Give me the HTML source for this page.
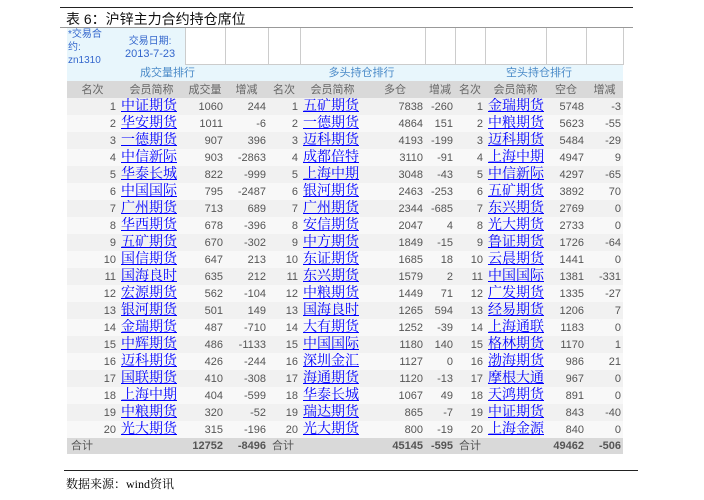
<!DOCTYPE html>
<html><head><meta charset="utf-8"><style>
body{margin:0;width:704px;height:500px;background:#fff;font-family:"Liberation Sans","Noto Sans CJK SC",sans-serif;position:relative;overflow:hidden}
.l1{position:absolute;left:60px;top:7px;width:573px;height:1px;background:#222}
.l2{position:absolute;left:60px;top:27px;width:573px;height:1px;background:#999}
.t{position:absolute;left:66px;top:9px;font-size:14px;color:#111}
.l3{position:absolute;left:64px;top:470px;width:574px;height:1px;background:#222}
.src{position:absolute;left:66px;top:475px;font-size:12px;font-family:"Liberation Serif","Noto Serif CJK SC",serif}
table{position:absolute;left:67px;top:28px;border-collapse:collapse;table-layout:fixed;font-size:11px;color:#555}
td{padding:0 2px;white-space:nowrap;overflow:hidden;line-height:14px}
.top td{height:36px;border:1px solid #ccc;border-top:none;background:#fff;padding:0}
.top td.b{background:#e8f6fc;border:none;color:#36c;vertical-align:top;font-size:10px}
.grp td{height:16px;background:#e8f6fc;color:#4a8ac8;text-align:center}
.hd td{height:17px;background:#d9d9d9;color:#666;text-align:center}
.r td{height:17px;max-height:17px;text-align:right;padding-top:0;padding-bottom:0}
.r:nth-child(odd) td{background:#f1f1f1}
.r:nth-child(even) td{background:#f8f8f8}
.r td.n{text-align:left;padding-left:3px}
a{color:#00f;text-decoration:underline;font-size:14px;line-height:14px;font-family:"Noto Serif CJK SC","Liberation Serif",serif;display:inline-block;height:17px;vertical-align:top}
.tot td{height:16px;background:#d9d9d9;font-weight:bold;text-align:right;color:#555}
.tot td.h{font-weight:normal;text-align:left;padding-left:4px}
</style></head><body>
<div class="l1"></div><div class="t">表 6：沪锌主力合约持仓席位</div><div class="l2"></div>
<table>
<colgroup><col style="width:51px"><col style="width:67px"><col style="width:40px"><col style="width:43px"><col style="width:32px"><col style="width:65px"><col style="width:60px"><col style="width:30px"><col style="width:30px"><col style="width:60px"><col style="width:40px"><col style="width:37px"></colgroup>
<tr class="top"><td class="b" colspan="2" style="position:relative"><div style="position:absolute;left:1px;top:0;line-height:13px">*交易合<br>约:<br>zn1310</div><div style="position:absolute;left:58px;top:7px;text-align:center;line-height:13px">交易日期:<br><span style="font-size:11px">2013-7-23</span></div></td><td style="border-left:1px solid #ccc"></td><td></td><td></td><td colspan="2"></td><td></td><td></td><td></td><td></td><td></td></tr>
<tr class="grp"><td colspan="4">成交量排行</td><td colspan="4">多头持仓排行</td><td colspan="4">空头持仓排行</td></tr>
<tr class="hd"><td>名次</td><td>会员简称</td><td>成交量</td><td>增减</td><td>名次</td><td>会员简称</td><td>多仓</td><td>增减</td><td>名次</td><td>会员简称</td><td>空仓</td><td>增减</td></tr>
<tbody id="b"></tbody>
</table>
<div class="l3"></div><div class="src">数据来源：wind资讯</div>
<script>
var d=[["中证期货",1060,244,"五矿期货",7838,-260,"金瑞期货",5748,-3],
["华安期货",1011,-6,"一德期货",4864,151,"中粮期货",5623,-55],
["一德期货",907,396,"迈科期货",4193,-199,"迈科期货",5484,-29],
["中信新际",903,-2863,"成都倍特",3110,-91,"上海中期",4947,9],
["华泰长城",822,-999,"上海中期",3048,-43,"中信新际",4297,-65],
["中国国际",795,-2487,"银河期货",2463,-253,"五矿期货",3892,70],
["广州期货",713,689,"广州期货",2344,-685,"东兴期货",2769,0],
["华西期货",678,-396,"安信期货",2047,4,"光大期货",2733,0],
["五矿期货",670,-302,"中方期货",1849,-15,"鲁证期货",1726,-64],
["国信期货",647,213,"东证期货",1685,18,"云晨期货",1441,0],
["国海良时",635,212,"东兴期货",1579,2,"中国国际",1381,-331],
["宏源期货",562,-104,"中粮期货",1449,71,"广发期货",1335,-27],
["银河期货",501,149,"国海良时",1265,594,"经易期货",1206,7],
["金瑞期货",487,-710,"大有期货",1252,-39,"上海通联",1183,0],
["中辉期货",486,-1133,"中国国际",1180,140,"格林期货",1170,1],
["迈科期货",426,-244,"深圳金汇",1127,0,"渤海期货",986,21],
["国联期货",410,-308,"海通期货",1120,-13,"摩根大通",967,0],
["上海中期",404,-599,"华泰长城",1067,49,"天鸿期货",891,0],
["中粮期货",320,-52,"瑞达期货",865,-7,"中证期货",843,-40],
["光大期货",315,-196,"光大期货",800,-19,"上海金源",840,0]];
var h="";d.forEach(function(r,i){var n=i+1;h+='<tr class="r"><td>'+n+'</td><td class="n"><a>'+r[0]+'</a></td><td>'+r[1]+'</td><td>'+r[2]+'</td><td>'+n+'</td><td class="n"><a>'+r[3]+'</a></td><td>'+r[4]+'</td><td>'+r[5]+'</td><td>'+n+'</td><td class="n"><a>'+r[6]+'</a></td><td>'+r[7]+'</td><td>'+r[8]+'</td></tr>';});
h+='<tr class="tot"><td class="h">合计</td><td></td><td>12752</td><td>-8496</td><td class="h">合计</td><td></td><td>45145</td><td>-595</td><td class="h">合计</td><td></td><td>49462</td><td>-506</td></tr>';
document.getElementById("b").innerHTML=h;
</script>
</body></html>
